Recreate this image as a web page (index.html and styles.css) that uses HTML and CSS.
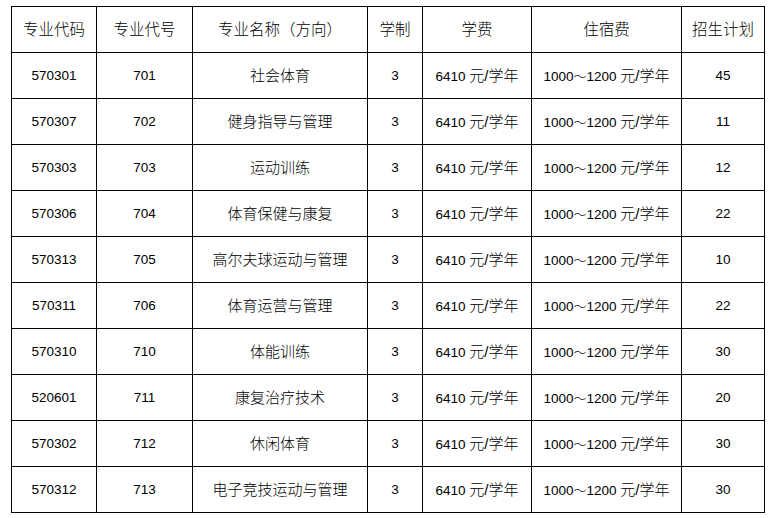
FILE: index.html
```html
<!DOCTYPE html>
<html lang="zh-CN">
<head>
<meta charset="utf-8">
<title>招生计划</title>
<link rel="stylesheet" href="styles.css">
</head>
<body>
<table class="plan">
  <colgroup>
    <col class="c1"><col class="c2"><col class="c3"><col class="c4"><col class="c5"><col class="c6"><col class="c7">
  </colgroup>
  <thead>
    <tr><th>专业代码</th><th>专业代号</th><th>专业名称（方向）</th><th>学制</th><th>学费</th><th>住宿费</th><th>招生计划</th></tr>
  </thead>
  <tbody>
    <tr><td>570301</td><td>701</td><td class="zh">社会体育</td><td>3</td><td>6410 <span class="zh">元/学年</span></td><td>1000<span class="tl">～</span>1200 <span class="zh">元/学年</span></td><td>45</td></tr>
    <tr><td>570307</td><td>702</td><td class="zh">健身指导与管理</td><td>3</td><td>6410 <span class="zh">元/学年</span></td><td>1000<span class="tl">～</span>1200 <span class="zh">元/学年</span></td><td>11</td></tr>
    <tr><td>570303</td><td>703</td><td class="zh">运动训练</td><td>3</td><td>6410 <span class="zh">元/学年</span></td><td>1000<span class="tl">～</span>1200 <span class="zh">元/学年</span></td><td>12</td></tr>
    <tr><td>570306</td><td>704</td><td class="zh">体育保健与康复</td><td>3</td><td>6410 <span class="zh">元/学年</span></td><td>1000<span class="tl">～</span>1200 <span class="zh">元/学年</span></td><td>22</td></tr>
    <tr><td>570313</td><td>705</td><td class="zh">高尔夫球运动与管理</td><td>3</td><td>6410 <span class="zh">元/学年</span></td><td>1000<span class="tl">～</span>1200 <span class="zh">元/学年</span></td><td>10</td></tr>
    <tr><td>570311</td><td>706</td><td class="zh">体育运营与管理</td><td>3</td><td>6410 <span class="zh">元/学年</span></td><td>1000<span class="tl">～</span>1200 <span class="zh">元/学年</span></td><td>22</td></tr>
    <tr><td>570310</td><td>710</td><td class="zh">体能训练</td><td>3</td><td>6410 <span class="zh">元/学年</span></td><td>1000<span class="tl">～</span>1200 <span class="zh">元/学年</span></td><td>30</td></tr>
    <tr><td>520601</td><td>711</td><td class="zh">康复治疗技术</td><td>3</td><td>6410 <span class="zh">元/学年</span></td><td>1000<span class="tl">～</span>1200 <span class="zh">元/学年</span></td><td>20</td></tr>
    <tr><td>570302</td><td>712</td><td class="zh">休闲体育</td><td>3</td><td>6410 <span class="zh">元/学年</span></td><td>1000<span class="tl">～</span>1200 <span class="zh">元/学年</span></td><td>30</td></tr>
    <tr><td>570312</td><td>713</td><td class="zh">电子竞技运动与管理</td><td>3</td><td>6410 <span class="zh">元/学年</span></td><td>1000<span class="tl">～</span>1200 <span class="zh">元/学年</span></td><td>30</td></tr>
  </tbody>
</table>
</body>
</html>
```

FILE: styles.css
```css
html, body {
  margin: 0;
  padding: 0;
  background: #fff;
}
body {
  padding: 6px 0 0 11px;
  font-family: "Liberation Sans", "Noto Sans CJK SC", sans-serif;
  color: #000;
}
.plan {
  border-collapse: collapse;
  table-layout: fixed;
  width: 753px;
}
.c1 { width: 85px; }
.c2 { width: 96px; }
.c3 { width: 175px; }
.c4 { width: 55px; }
.c5 { width: 109px; }
.c6 { width: 150px; }
.c7 { width: 83px; }
.plan th, .plan td {
  border: 1px solid #000;
  height: 45px;
  padding: 0;
  text-align: center;
  vertical-align: middle;
  white-space: nowrap;
  line-height: 1;
}
.plan th {
  font-weight: 300;
  font-size: 15.5px;
}
.plan td {
  font-size: 13.5px;
}
.plan .zh {
  font-size: 15px;
  font-weight: 300;
}
.plan .tl {
  font-size: 13px;
  font-weight: 300;
}
```
